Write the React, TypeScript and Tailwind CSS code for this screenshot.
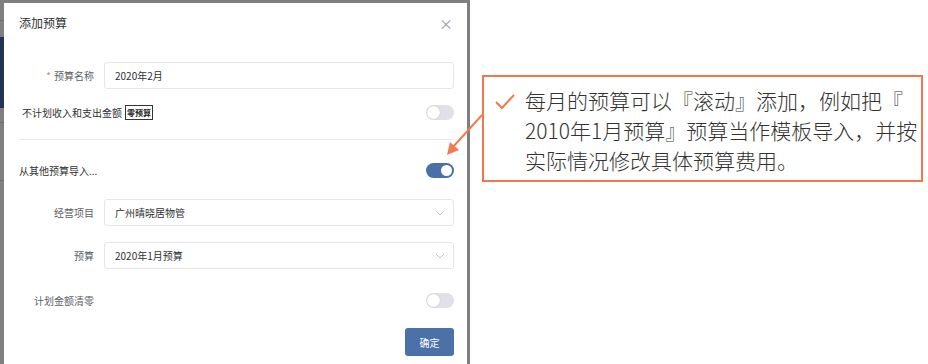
import React from "react";

function Switch({ on }: { on?: boolean }) {
  return on ? (
    <div className="flex h-[15px] w-[28px] items-center justify-end rounded-full bg-[#4a70a8] px-[2px]">
      <div className="h-[11px] w-[11px] rounded-full bg-white" />
    </div>
  ) : (
    <div className="flex h-[15px] w-[28px] items-center rounded-full bg-[#dfe1e7] px-[1px]">
      <div className="h-[13px] w-[13px] rounded-full bg-white shadow-[0_0_1px_rgba(0,0,0,0.25)]" />
    </div>
  );
}

function Chevron() {
  return (
    <svg width="10" height="6" viewBox="0 0 10 6" className="text-[#c0c4cc]">
      <path d="M1 1l4 4 4-4" fill="none" stroke="currentColor" strokeWidth="1" />
    </svg>
  );
}

function FieldRow({ label, children, required }: { label: string; children: React.ReactNode; required?: boolean }) {
  return (
    <div className="flex items-center">
      <div className="w-[75px] text-right text-[10px] text-[#606266]">
        {required && <span className="mr-[3px] text-[#f56c6c]">*</span>}
        {label}
      </div>
      <div className="ml-[10px] flex-1">{children}</div>
    </div>
  );
}

export default function App() {
  const font = { fontFamily: '"Noto Sans CJK SC", "Noto Sans", sans-serif' };
  return (
    <div className="relative flex h-[364px] w-[928px] overflow-hidden bg-white" style={font}>
      <div className="relative h-full w-[470px] bg-[#7f7f7f]">
        <div className="absolute left-0 top-[37px] h-[71px] w-[4px] bg-[#233452]" />
        <div className="absolute left-0 top-[20px] h-px w-[4px] bg-[#6f6f6f]" />
        <div className="absolute left-0 top-[122px] h-px w-[4px] bg-[#6f6f6f]" />
        <div className="absolute left-0 top-[180px] h-px w-[4px] bg-[#6f6f6f]" />
        <div className="ml-[4px] mt-[3px] h-[370px] w-[463px] bg-white">
          <div className="flex h-[40px] items-center justify-between pl-[15px] pr-[13px]">
            <span className="text-[12px] text-[#303133]">添加预算</span>
            <span className="mr-[1px] text-[14px] leading-none text-[#9a9ca3]">×</span>
          </div>
          <div className="flex flex-col pl-[15px] pr-[13px]">
            <div className="mt-[19px]">
              <FieldRow label="预算名称" required>
                <div className="flex h-[27px] items-center rounded-[3px] border border-[#e4e6eb] px-[10px] text-[10px] text-[#303133]">
                  2020年2月
                </div>
              </FieldRow>
            </div>
            <div className="mt-[15px] flex h-[16px] items-center justify-between pl-[3px]">
              <div className="flex items-center text-[10px] text-[#303133]">
                不计划收入和支出金额
                <span className="ml-[3px] border border-[#333] px-[1px] text-[8px] font-bold leading-[13px] text-[#222]">
                  零预算
                </span>
              </div>
              <Switch />
            </div>
            <div className="mt-[19px] h-px bg-[#e6e8ec]" />
            <div className="mt-[22px] flex h-[16px] items-center justify-between">
              <span className="text-[10px] text-[#303133]">从其他预算导入...</span>
              <Switch on />
            </div>
            <div className="mt-[21px]">
              <FieldRow label="经营项目">
                <div className="flex h-[27px] items-center justify-between rounded-[3px] border border-[#e4e6eb] pl-[10px] pr-[8px] text-[10px] text-[#303133]">
                  广州晴晓居物管
                  <Chevron />
                </div>
              </FieldRow>
            </div>
            <div className="mt-[16px]">
              <FieldRow label="预算">
                <div className="flex h-[27px] items-center justify-between rounded-[3px] border border-[#e4e6eb] pl-[10px] pr-[8px] text-[10px] text-[#303133]">
                  2020年1月预算
                  <Chevron />
                </div>
              </FieldRow>
            </div>
            <div className="mt-[23px] flex h-[16px] items-center justify-between">
              <div className="w-[75px] text-right text-[10px] text-[#606266]">计划金额清零</div>
              <Switch />
            </div>
            <div className="mt-[20px] flex justify-end">
              <div className="flex h-[28px] w-[49px] items-center justify-center rounded-[3px] bg-[#4b72a8] text-[10px] text-white">
                确定
              </div>
            </div>
          </div>
        </div>
      </div>

      <div className="absolute left-[482px] top-[75px] flex h-[107px] w-[441px] border-2 border-[#ee7a4c] bg-white pl-[10px] pt-[8px]">
        <svg width="22" height="18" viewBox="0 0 22 18" className="mt-[8px] shrink-0">
          <path d="M2 9l6 6L20 2" fill="none" stroke="#ee7a4c" strokeWidth="2" />
        </svg>
        <div className="ml-[9px] text-[21px] font-light leading-[30px] text-[#333]">
          每月的预算可以『滚动』添加，例如把『
          <br />
          2010年1月预算』预算当作模板导入，并按
          <br />
          实际情况修改具体预算费用。
        </div>
      </div>

      <svg className="absolute left-[440px] top-[110px]" width="50" height="50" viewBox="0 0 50 50">
        <line x1="42" y1="5" x2="12" y2="38" stroke="#ef7d4f" strokeWidth="2" />
        <polygon points="7,45 10,32 19,40" fill="#ef7d4f" />
      </svg>
    </div>
  );
}
